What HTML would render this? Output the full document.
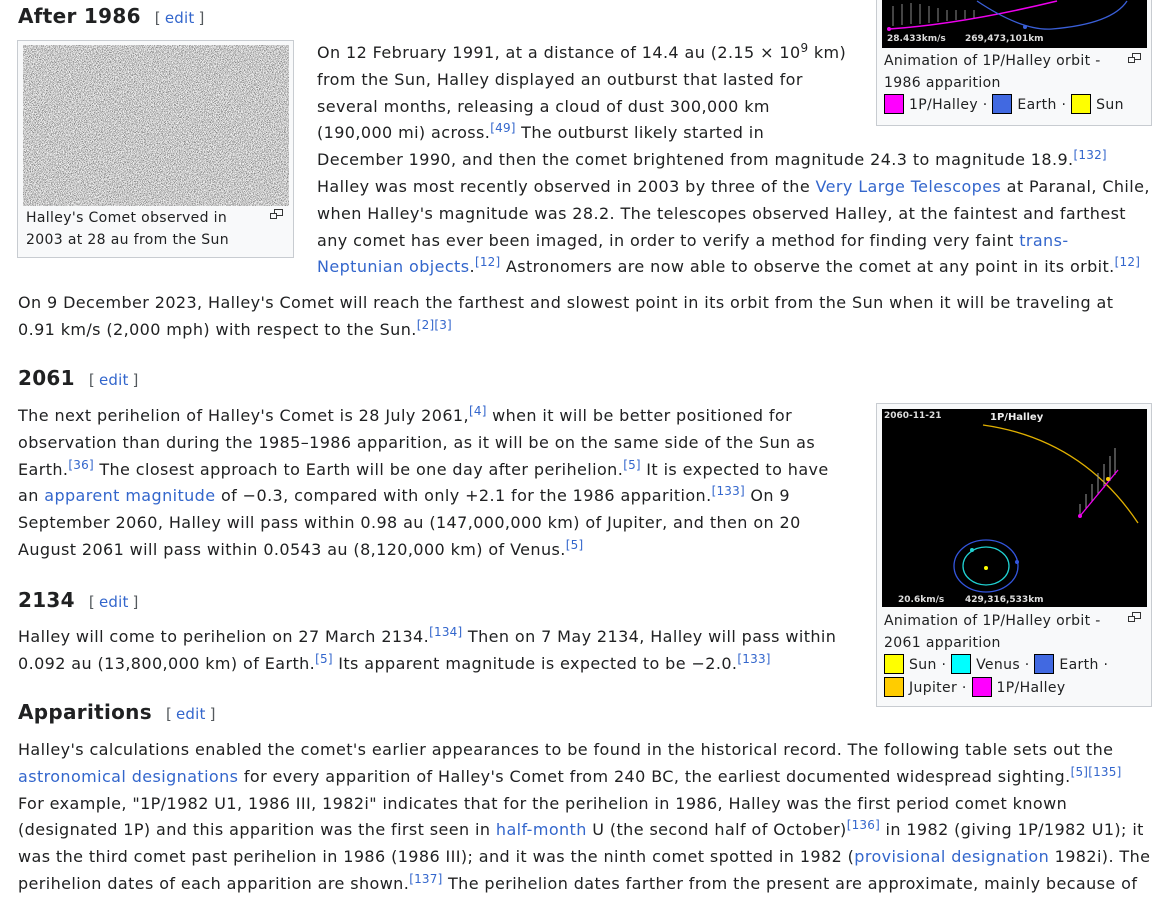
<!DOCTYPE html>
<html><head><meta charset="utf-8"><style>
*{margin:0;padding:0;box-sizing:border-box}
body{width:1164px;height:899px;overflow:hidden;background:#fff;font-family:"DejaVu Sans","Liberation Sans",sans-serif;color:#202122;position:relative}
.p{position:absolute;font-size:16px;line-height:26.8px;white-space:nowrap;letter-spacing:0.4px}
a{color:#3366cc;text-decoration:none}
sup{font-size:12px;line-height:0;vertical-align:6px;color:#3366cc;letter-spacing:0.2px}
sup.n{color:#202122}
h2{position:absolute;font-size:20px;font-weight:bold;line-height:24px;white-space:nowrap;letter-spacing:0.3px}
h2 span{font-size:15px;font-weight:normal;color:#54595d;margin-left:14px;letter-spacing:0.2px}
h2 span a{margin:0 4px}
.box{position:absolute;border:1px solid #c8ccd1;background:#f8f9fa}
.cap{position:absolute;font-size:14px;line-height:21.5px;white-space:nowrap;color:#202122;letter-spacing:0.35px}
.sw{display:inline-block;width:20px;height:20px;border:1px solid #000;vertical-align:-5px;margin-right:5px}
.mag{position:absolute;width:13px;height:10px}
</style></head><body>

<h2 style="left:18px;top:4px">After 1986<span>[<a>edit</a>]</span></h2>

<div class="box" style="left:17px;top:40px;width:277px;height:218px">
<svg style="position:absolute;left:5px;top:4px" width="266" height="161">
<filter id="f"><feTurbulence type="fractalNoise" baseFrequency="1.4" numOctaves="1" seed="3"/><feColorMatrix type="matrix" values="0 0 0 0 0  0 0 0 0 0  0 0 0 0 0  2.2 0 0 0 -0.95"/></filter>
<rect width="266" height="161" fill="#f4f4f4"/><rect width="266" height="161" filter="url(#f)"/></svg>
<div class="cap" style="left:8px;top:167px">Halley's Comet observed in<br>2003 at 28 au from the Sun</div>
<svg class="mag" style="left:252px;top:168px" viewBox="0 0 13 10"><rect x="4.5" y="0.5" width="8" height="6" fill="none" stroke="#333"/><rect x="0.5" y="4.5" width="6" height="5" fill="#f8f9fa" stroke="#333"/></svg>
</div>

<div class="box" style="left:876px;top:-5px;width:276px;height:131px">
<svg style="position:absolute;left:5px;top:0" width="265" height="52"><rect width="265" height="52" fill="#000"/>
<g stroke="#888" stroke-width="1"><line x1="11" y1="10" x2="11" y2="30"/><line x1="20" y1="8" x2="20" y2="29"/><line x1="29" y1="7" x2="29" y2="28"/><line x1="38" y1="8" x2="38" y2="28"/><line x1="47" y1="10" x2="47" y2="27"/><line x1="56" y1="12" x2="56" y2="26"/><line x1="65" y1="14" x2="65" y2="25"/><line x1="74" y1="14" x2="74" y2="24"/><line x1="83" y1="14" x2="83" y2="23"/><line x1="92" y1="14" x2="92" y2="22"/></g>
<path d="M7 33 Q80 28 175 5" stroke="#e0e" stroke-width="1.5" fill="none"/><circle cx="7" cy="33" r="2" fill="#e0e"/>
<path d="M95 5 Q140 35 170 33 Q230 28 245 5" stroke="#3a5fd8" stroke-width="1.3" fill="none"/><circle cx="143" cy="31" r="2" fill="#3a5fd8"/>
<text x="5" y="45" font-size="9" fill="#ddd" font-weight="bold">28.433km/s</text><text x="83" y="45" font-size="9" fill="#ddd" font-weight="bold">269,473,101km</text></svg>
<div class="cap" style="left:7px;top:55px">Animation of 1P/Halley orbit -<br>1986 apparition<br><span class="sw" style="background:#f0f"></span>1P/Halley · <span class="sw" style="background:#4169e1"></span>Earth · <span class="sw" style="background:#ff0"></span>Sun</div>
<svg class="mag" style="left:251px;top:57px" viewBox="0 0 13 10"><rect x="4.5" y="0.5" width="8" height="6" fill="none" stroke="#333"/><rect x="0.5" y="4.5" width="6" height="5" fill="#f8f9fa" stroke="#333"/></svg>
</div>

<div class="p" style="left:317px;top:40px">On 12 February 1991, at a distance of 14.4 au (2.15 × 10<sup class="n">9</sup> km)<br>from the Sun, Halley displayed an outburst that lasted for<br>several months, releasing a cloud of dust 300,000 km<br>(190,000 mi) across.<sup>[49]</sup> The outburst likely started in<br>December 1990, and then the comet brightened from magnitude 24.3 to magnitude 18.9.<sup>[132]</sup><br>Halley was most recently observed in 2003 by three of the <a>Very Large Telescopes</a> at Paranal, Chile,<br>when Halley's magnitude was 28.2. The telescopes observed Halley, at the faintest and farthest<br>any comet has ever been imaged, in order to verify a method for finding very faint <a>trans-</a><br><a>Neptunian objects</a>.<sup>[12]</sup> Astronomers are now able to observe the comet at any point in its orbit.<sup>[12]</sup></div>

<div class="p" style="left:18px;top:290px">On 9 December 2023, Halley's Comet will reach the farthest and slowest point in its orbit from the Sun when it will be traveling at<br>0.91 km/s (2,000 mph) with respect to the Sun.<sup>[2]</sup><sup>[3]</sup></div>

<h2 style="left:18px;top:366px">2061<span>[<a>edit</a>]</span></h2>

<div class="p" style="left:18px;top:403px">The next perihelion of Halley's Comet is 28 July 2061,<sup>[4]</sup> when it will be better positioned for<br>observation than during the 1985–1986 apparition, as it will be on the same side of the Sun as<br>Earth.<sup>[36]</sup> The closest approach to Earth will be one day after perihelion.<sup>[5]</sup> It is expected to have<br>an <a>apparent magnitude</a> of −0.3, compared with only +2.1 for the 1986 apparition.<sup>[133]</sup> On 9<br>September 2060, Halley will pass within 0.98 au (147,000,000 km) of Jupiter, and then on 20<br>August 2061 will pass within 0.0543 au (8,120,000 km) of Venus.<sup>[5]</sup></div>

<div class="box" style="left:876px;top:403px;width:276px;height:304px">
<svg style="position:absolute;left:5px;top:5px" width="265" height="198"><rect width="265" height="198" fill="#000"/>
<text x="2" y="9" font-size="9" fill="#ddd" font-weight="bold">2060-11-21</text><text x="108" y="11" font-size="10" fill="#eee" font-weight="bold">1P/Halley</text>
<path d="M101 16 Q200 30 256 114" stroke="#e0b000" stroke-width="1.3" fill="none"/>
<g stroke="#999"><line x1="198" y1="107" x2="198" y2="95"/><line x1="204" y1="100" x2="204" y2="85"/><line x1="210" y1="93" x2="210" y2="75"/><line x1="216" y1="86" x2="216" y2="64"/><line x1="222" y1="79" x2="222" y2="55"/><line x1="228" y1="72" x2="228" y2="47"/><line x1="233" y1="66" x2="233" y2="39"/></g>
<line x1="198" y1="107" x2="236" y2="61" stroke="#e0e" stroke-width="1.3"/><circle cx="198" cy="107" r="2" fill="#e0e"/><circle cx="226" cy="70" r="2" fill="#fc0"/>
<ellipse cx="104" cy="157" rx="23" ry="19" stroke="#20d0d0" stroke-width="1.3" fill="none"/><ellipse cx="104" cy="157" rx="32" ry="26" stroke="#3355dd" stroke-width="1.3" fill="none"/>
<circle cx="104" cy="159" r="2" fill="#ff0"/><circle cx="90" cy="141" r="2" fill="#20d0d0"/><circle cx="135" cy="153" r="2" fill="#3355dd"/>
<text x="16" y="193" font-size="9" fill="#ddd" font-weight="bold">20.6km/s</text><text x="83" y="193" font-size="9" fill="#ddd" font-weight="bold">429,316,533km</text></svg>
<div class="cap" style="left:7px;top:207px">Animation of 1P/Halley orbit -<br>2061 apparition<br><span class="sw" style="background:#ff0"></span>Sun · <span class="sw" style="background:#0ff"></span>Venus · <span class="sw" style="background:#4169e1"></span>Earth ·<br><span class="sw" style="background:#fc0"></span>Jupiter · <span class="sw" style="background:#f0f"></span>1P/Halley</div>
<svg class="mag" style="left:251px;top:208px" viewBox="0 0 13 10"><rect x="4.5" y="0.5" width="8" height="6" fill="none" stroke="#333"/><rect x="0.5" y="4.5" width="6" height="5" fill="#f8f9fa" stroke="#333"/></svg>
</div>

<h2 style="left:18px;top:588px">2134<span>[<a>edit</a>]</span></h2>

<div class="p" style="left:18px;top:624px">Halley will come to perihelion on 27 March 2134.<sup>[134]</sup> Then on 7 May 2134, Halley will pass within<br>0.092 au (13,800,000 km) of Earth.<sup>[5]</sup> Its apparent magnitude is expected to be −2.0.<sup>[133]</sup></div>

<h2 style="left:18px;top:700px">Apparitions<span>[<a>edit</a>]</span></h2>

<div class="p" style="left:18px;top:737px">Halley's calculations enabled the comet's earlier appearances to be found in the historical record. The following table sets out the<br><a>astronomical designations</a> for every apparition of Halley's Comet from 240 BC, the earliest documented widespread sighting.<sup>[5]</sup><sup>[135]</sup><br>For example, "1P/1982 U1, 1986 III, 1982i" indicates that for the perihelion in 1986, Halley was the first period comet known<br>(designated 1P) and this apparition was the first seen in <a>half-month</a> U (the second half of October)<sup>[136]</sup> in 1982 (giving 1P/1982 U1); it<br>was the third comet past perihelion in 1986 (1986 III); and it was the ninth comet spotted in 1982 (<a>provisional designation</a> 1982i). The<br>perihelion dates of each apparition are shown.<sup>[137]</sup> The perihelion dates farther from the present are approximate, mainly because of</div>

</body></html>
